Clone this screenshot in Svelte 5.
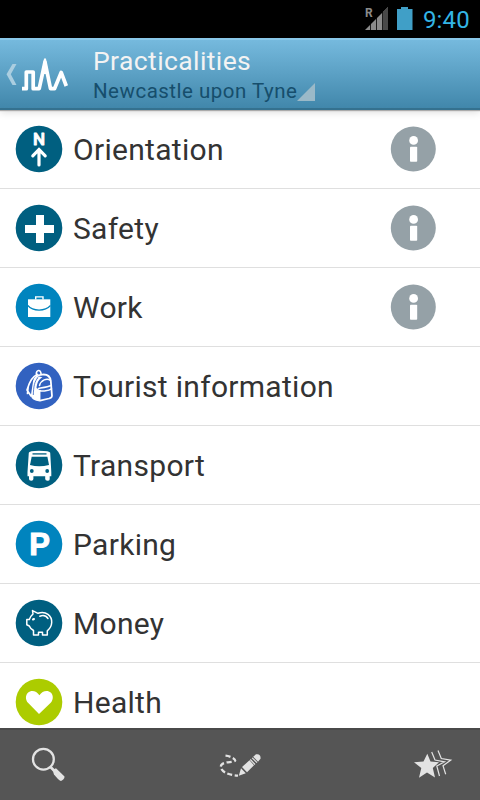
<script>
  const rows = [
    { label: 'Orientation', icon: 'compass', color: '#005f80', info: true },
    { label: 'Safety', icon: 'cross', color: '#005f80', info: true },
    { label: 'Work', icon: 'case', color: '#0084be', info: true },
    { label: 'Tourist information', icon: 'bag', color: '#3262c0' },
    { label: 'Transport', icon: 'bus', color: '#005f80' },
    { label: 'Parking', icon: 'parking', color: '#0084be' },
    { label: 'Money', icon: 'pig', color: '#005f80' },
    { label: 'Health', icon: 'heart', color: '#accc00' }
  ];
</script>

<div class="screen">
  <div class="status">
    <svg class="signal" width="26" height="26" viewBox="0 0 26 26">
      <path d="M0 23 L23 0 V23Z" fill="#8b8b8b" />
      <path d="M18 5 L23 0 V23 H18Z" fill="#484848" />
      <path d="M5.5 15V23M11.5 9V23M17.5 3V23" stroke="#000" stroke-width="0.8" />
      <text x="0" y="10" class="roam">R</text>
    </svg>
    <svg class="battery" width="16" height="24" viewBox="0 0 16 24">
      <path d="M0 2H4V0H11V2H15.5V23H0Z" fill="#409fc7" />
    </svg>
    <span class="clock">9:40</span>
  </div>

  <header>
    <svg class="brand" width="72" height="70" viewBox="0 0 72 70">
      <path d="M16.5 26H12.5L6.5 36.3L12.5 47H16.5L10.8 36.3Z" fill="#abcee0" />
      <path d="M22 50.7H26.3V34H33.2V50.7H39.2L45 24L50.5 50.7H54.5L61.2 34.5L66.3 48" fill="none" stroke="#fff" stroke-width="3.7" stroke-linejoin="round" />
      <path d="M41.8 36L44 20.5H46L48.2 36Z" fill="#fff" />
    </svg>
    <div class="titles">
      <div class="title">Practicalities</div>
      <div class="place">
        <span>Newcastle upon Tyne</span>
        <svg width="18" height="18" viewBox="0 0 18 18"><path d="M0 18L18 0V18Z" fill="#9ab9c8" /></svg>
      </div>
    </div>
  </header>

  <main>
    {#each rows as row}
      <div class="row">
        <svg class="icon" width="48" height="48" viewBox="0 0 48 48">
          <circle cx="24" cy="24" r="23.3" fill={row.color} />
          {#if row.icon === 'compass'}
            <text x="24" y="20.2" text-anchor="middle" class="north">N</text>
            <path d="M24 40V25M17.8 30.8L24 24.5L30.2 30.8" fill="none" stroke="#fff" stroke-width="3.2" stroke-linecap="round" />
          {:else if row.icon === 'cross'}
            <path d="M21 11H29V21H39V29H29V39H21V29H10V21H21Z" fill="#fff" />
          {:else if row.icon === 'case'}
            <path d="M13 16.3H35.3V34H13Z" fill="#fff" />
            <path d="M20.7 16.5V13.9H28V16.5" fill="none" stroke="#fff" stroke-width="1.4" />
            <path d="M12.8 22.5C18 28.6 30 28.6 35.5 22.5" fill="none" stroke={row.color} stroke-width="1.2" />
          {:else if row.icon === 'bag'}
            <g fill="none" stroke="#fff" stroke-linecap="round" stroke-linejoin="round">
              <path d="M21.5 13C20.8 10.5 22.2 8.2 24 8.5S26 11 26.2 12.5" stroke-width="1.6" />
              <path d="M19 19C20 14.5 23 13 27 12.6C32 12 35.2 14.5 35.8 19L37 34C37 35.8 35.5 36 34 36.5L25 38.7C20 38 17 36 16.8 33.5Z" stroke-width="1.8" />
              <path d="M22.5 12.5C17 14.5 14 21 12.2 27.5M12 28L16 34M13.2 24.5L12.5 31.5" stroke-width="1.7" />
              <path d="M24.5 23.5C26 18 32 15.6 35.5 18.5M23.5 26.5C27 25.8 33 24.8 36.3 23.5M24.7 37.5V28.5C28 29.7 33.5 28.8 36.5 26.8" stroke-width="1.5" />
            </g>
            <path d="M19 18L24 14.5L27.5 15.3C24 17 22 21 21.5 26L24.5 28L25 38.5C20 38 17 36 16.8 33.5Z" fill="#fff" />
            <path d="M23 15.8C19.5 19 18.5 25 18.3 33" fill="none" stroke={row.color} stroke-width="0.8" />
          {:else if row.icon === 'bus'}
            <path d="M13.8 11.8Q14 10 24 9.8Q35 10 35.2 11.8L36.3 31V35.3H34.7V38.2Q34.7 39.8 32.5 39.8T30.2 38V35.3H18.4V38Q18.4 39.8 16.2 39.8T14 38V35.3H12.5V31Z" fill="#fff" />
            <path d="M16.7 15.8H32.4L34 24Q24 26.4 15 24Z" fill={row.color} />
            <path d="M17.5 12.9H31.5" stroke={row.color} stroke-width="1.3" />
            <circle cx="16.8" cy="30" r="1.9" fill={row.color} /><circle cx="32.2" cy="30" r="1.9" fill={row.color} />
          {:else if row.icon === 'parking'}
            <text x="14.2" y="35.4" class="park">P</text>
          {:else if row.icon === 'pig'}
            <g fill="none" stroke="#fff" stroke-width="1.5" stroke-linejoin="round" stroke-linecap="round">
              <path d="M18 15L17.5 11.6L23 14.3C31 11.5 37 17 36.7 23.5C36.5 28 34.5 30 32.3 31.8V36H27.5V33.3H23.5V36H18.5V31.5C16.5 30.3 15 29 14.3 27L11.8 25.8V20.5H14.3C15 18 16.3 16.5 18 15Z" />
              <path d="M24.8 17.3C28 15.9 31.3 17 33 19.5" /><path d="M18 20.5L19 20" stroke-width="2" />
            </g>
          {:else}
            <path d="M24 36L13 24.8C10.3 21.8 10.3 17.3 12.9 14.7C16.5 11.7 21.5 13 24.4 17.2C27.3 13 32.4 11.7 36 14.7C38.5 17.3 38.4 21.8 35.7 24.8Z" fill="#fff" />
          {/if}
        </svg>
        <span class="label">{row.label}</span>
        {#if row.info}
          <svg class="info" width="46" height="46" viewBox="0 0 46 46">
            <circle cx="23.3" cy="23" r="22.5" fill="#95a1a7" />
            <circle cx="23.6" cy="14.4" r="4.4" fill="#fff" />
            <rect x="20" y="20.8" width="7.2" height="15" rx="0.8" fill="#fff" />
          </svg>
        {/if}
      </div>
    {/each}
  </main>

  <footer>
    <svg width="48" height="48" viewBox="24 740 48 48">
      <circle cx="43.4" cy="759.2" r="10.4" fill="none" stroke="#e3e3e3" stroke-width="2.3" />
      <path d="M50.5 767L54 770.5" stroke="#e3e3e3" stroke-width="2.6" />
      <path d="M52.5 770L56 768.3L64.5 776.5Q64.7 779 61 781Q59 780.5 54 774.5Z" fill="#e3e3e3" />
    </svg>
    <svg width="48" height="48" viewBox="216 740 48 48">
      <path d="M225.5 755.7C230 756 235 758.5 235.2 760.5C234 763 224 761 221.3 765C219 770 226 775 238 775.7" fill="none" stroke="#e3e3e3" stroke-width="2.3" stroke-dasharray="5 2.6" />
      <path d="M238.8 775.8L241 768.2L245.8 773.2Z M242 767L249.5 760.3L254 765.3L247 772.3Z" fill="#e3e3e3" />
      <path d="M250.3 759.5L255 764.5M252.2 757.8L257 762.7" stroke="#e3e3e3" stroke-width="1.2" />
      <path d="M253.2 756.8L256 754.3Q261 753.5 260.5 758.7L258 761.7Z" fill="#e3e3e3" />
    </svg>
    <svg width="48" height="48" viewBox="408 740 48 48">
      <path d="M427.3 753.7L430.5 761.5L439 762.2L432.8 768L435 777.5L427 772.5L419 777.8L421.3 768L414 762.3L423.5 761.5Z" fill="#e3e3e3" />
      <path d="M431.7 752L435 760L444.5 761.8L436.8 766L439.5 776M438 750.5L441.3 758.5L450.8 760.1L443 765.8L445.7 774.2" fill="none" stroke="#e3e3e3" stroke-width="1.2" />
    </svg>
  </footer>
</div>

<style>
  .screen { width: 480px; height: 800px; display: flex; flex-direction: column; overflow: hidden; background: #fff; font-family: Roboto, sans-serif; }
  .status { flex: 0 0 38px; background: #000; display: flex; justify-content: flex-end; align-items: flex-start; box-sizing: border-box; padding: 7px 10px 0 0; }
  .roam { font: 700 12px Roboto, sans-serif; fill: #8b8b8b; }
  .signal { margin-right: 6px; }
  .battery { margin-right: 10px; }
  .clock { color: #33b5e5; font-size: 24px; line-height: 26px; letter-spacing: 0.2px; }
  header { flex: 0 0 72px; box-sizing: border-box; display: flex; background: linear-gradient(#77bbdf, #4187ab); border-bottom: 2px solid #34718f; box-shadow: inset 0 2px #89c7e8, 0 1px 1px #aaa, 0 2px 8px rgba(0, 0, 0, 0.15); position: relative; z-index: 1; }
  .brand { flex: none; }
  .titles { margin-left: 21px; padding-top: 6px; }
  .title { color: #f3f3f3; font-size: 26.5px; line-height: 34px; letter-spacing: 0.4px; }
  .place { display: flex; align-items: flex-end; color: #164e6c; font-size: 20.5px; line-height: 24px; letter-spacing: 0.5px; white-space: nowrap; }
  .place span { padding-top: 1px; }
  .place svg { margin-bottom: 2px; }
  main { flex: 1 1 0; min-height: 0; overflow: hidden; }
  .row { height: 79px; box-sizing: border-box; border-bottom: 1px solid #dfdfdf; display: flex; align-items: center; padding: 0 44px 0 15px; }
  .label { margin-left: 10px; padding-top: 2px; flex: 1; color: #333; font-size: 30px; line-height: 40px; letter-spacing: 0.3px; }
  .north { font: 500 17px Roboto, sans-serif; fill: #fff; stroke: #fff; stroke-width: 0.9px; stroke-linejoin: round; }
  .park { font: 700 31px "Liberation Sans", sans-serif; fill: #fff; stroke: #fff; stroke-width: 1px; }
  footer { flex: 0 0 72px; box-sizing: border-box; background: #555; border-top: 2px solid #4a4a4a; display: flex; justify-content: space-between; padding: 10px 24px 0; }
</style>
